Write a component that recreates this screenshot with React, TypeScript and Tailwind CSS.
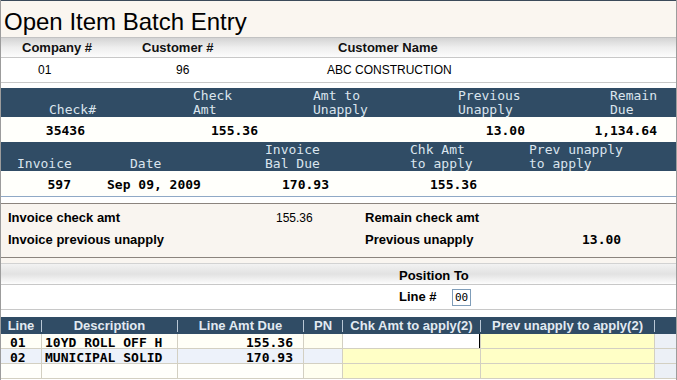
import React from "react";

const SANS = "font-['Liberation_Sans',Arial,sans-serif]";
const MONO = "font-['DejaVu_Sans_Mono','Liberation_Mono',monospace]";

type Cell = { w: string; bg: string; text?: string; cls?: string; border?: boolean; cursor?: boolean };

function GridRow({ cells }: { cells: Cell[] }) {
  return (
    <div className="flex h-[15px] border-b border-[#d3d0c2]">
      {cells.map((c, i) => (
        <div
          key={i}
          className={`${c.w} ${c.bg} ${c.border === false ? "" : "border-r border-[#d3d0c2]"} flex h-full overflow-visible whitespace-pre ${MONO} font-bold text-[13px] leading-[17px] text-black ${c.cls ?? ""}`}
        >
          {c.cursor ? <div className="ml-auto w-px h-full bg-black" /> : c.text}
        </div>
      ))}
    </div>
  );
}

export default function App() {
  const navyText = `${MONO} text-[13px] text-[#dbe5ee] whitespace-pre`;
  return (
    <div className={`w-[677px] h-[380px] overflow-hidden bg-white border-x border-[#9c9c9c] flex flex-col ${SANS}`}>
      <div className="h-px bg-[#3b4a5a] shrink-0" />
      {/* Title */}
      <div className="h-[37px] shrink-0 bg-[#faf6f0] border-b border-[#c2c2c2] pl-[3px] pt-[5px] text-[24px] leading-[31px] text-black">
        Open Item Batch Entry
      </div>
      {/* Header labels */}
      <div className="h-[20px] shrink-0 flex items-center bg-gradient-to-b from-[#d4d4d4] via-[#eeeeee] to-[#fcfcfc] border-b border-[#c8c8c8] text-[13px] font-bold text-[#111]">
        <div className="w-[141px] pl-[21px]">Company #</div>
        <div className="w-[196px]">Customer #</div>
        <div>Customer Name</div>
      </div>
      {/* Values */}
      <div className="h-[25px] shrink-0 flex items-center bg-white border-b border-[#c8c8c8] text-[12px] text-black">
        <div className="w-[175px] pl-[37px]">01</div>
        <div className="w-[151px]">96</div>
        <div>ABC CONSTRUCTION</div>
      </div>
      <div className="h-[5px] shrink-0 bg-white" />
      {/* Navy header 1 */}
      <div className={`h-[29px] shrink-0 flex bg-[#304c65] pt-[1px] leading-[14px] ${navyText}`}>
        <div className="w-[192px] pl-[48px] flex flex-col">
          <div className="h-[14px]"> </div>
          <div className="h-[14px]">Check#</div>
        </div>
        <div className="w-[120px] flex flex-col">
          <div className="h-[14px]">Check</div>
          <div className="h-[14px]">Amt</div>
        </div>
        <div className="w-[145px] flex flex-col">
          <div className="h-[14px]">Amt to</div>
          <div className="h-[14px]">Unapply</div>
        </div>
        <div className="w-[152px] flex flex-col">
          <div className="h-[14px]">Previous</div>
          <div className="h-[14px]">Unapply</div>
        </div>
        <div className="flex-1 flex flex-col">
          <div className="h-[14px]">Remain</div>
          <div className="h-[14px]">Due</div>
        </div>
      </div>
      {/* Data 1 */}
      <div className={`h-[25px] shrink-0 flex bg-[#fffffb] pt-[3px] leading-[22px] ${MONO} font-bold text-[13px] text-black whitespace-pre`}>
        <div className="w-[84px] text-right">35436</div>
        <div className="w-[173px] text-right">155.36</div>
        <div className="w-[267px] text-right">13.00</div>
        <div className="w-[132px] text-right">1,134.64</div>
      </div>
      {/* Navy header 2 */}
      <div className={`h-[29px] shrink-0 flex bg-[#304c65] pt-[1px] leading-[14px] ${navyText}`}>
        <div className="w-[129px] pl-[16px] flex flex-col">
          <div className="h-[14px]"> </div>
          <div className="h-[14px]">Invoice</div>
        </div>
        <div className="w-[135px] flex flex-col">
          <div className="h-[14px]"> </div>
          <div className="h-[14px]">Date</div>
        </div>
        <div className="w-[145px] flex flex-col">
          <div className="h-[14px]">Invoice</div>
          <div className="h-[14px]">Bal Due</div>
        </div>
        <div className="w-[119px] flex flex-col">
          <div className="h-[14px]">Chk Amt</div>
          <div className="h-[14px]">to apply</div>
        </div>
        <div className="flex-1 flex flex-col">
          <div className="h-[14px]">Prev unapply</div>
          <div className="h-[14px]">to apply</div>
        </div>
      </div>
      {/* Data 2 */}
      <div className={`h-[26px] shrink-0 flex bg-[#fffffb] border-b border-[#90a9c6] pt-[3px] leading-[22px] ${MONO} font-bold text-[13px] text-black whitespace-pre`}>
        <div className="w-[70px] text-right">597</div>
        <div className="w-[140px] pl-[36px]">Sep 09, 2009</div>
        <div className="w-[118px] text-right">170.93</div>
        <div className="w-[148px] text-right">155.36</div>
      </div>
      <div className="h-[6px] shrink-0 bg-white" />
      {/* Cream summary */}
      <div className="h-[55px] shrink-0 bg-[#f9f5f0] border-y border-[#8b847e] pt-[3px] leading-[22px]">
        <div className="flex h-[22px]">
          <div className="w-[275px] pl-[7px] text-[13px] font-bold text-black">Invoice check amt</div>
          <div className="w-[89px] text-[12px] text-black">155.36</div>
          <div className="w-[217px] text-[13px] font-bold text-black">Remain check amt</div>
          <div className={`flex-1 ${MONO} font-bold text-[13px] text-black`}></div>
        </div>
        <div className="flex h-[22px]">
          <div className="w-[275px] pl-[7px] text-[13px] font-bold text-black">Invoice previous unapply</div>
          <div className="w-[89px] text-[12px] text-black"></div>
          <div className="w-[217px] text-[13px] font-bold text-black">Previous unapply</div>
          <div className={`flex-1 ${MONO} font-bold text-[13px] text-black`}>13.00</div>
        </div>
      </div>
      <div className="h-[6px] shrink-0 bg-[#f9f5f0] border-b border-[#d2d2d2]" />
      {/* Position To */}
      <div className="h-[21px] shrink-0 bg-gradient-to-b from-[#f2f2f2] via-[#e2e2e2] to-[#fdfdfd] border-b border-[#c8c8c8] pl-[398px] pt-[3px] leading-[17px] text-[13px] font-bold text-black">
        Position To
      </div>
      <div className="h-[25px] shrink-0 flex items-center bg-white border-b border-[#c8c8c8] pl-[398px]">
        <div className="w-[53px] text-[13px] font-bold text-black">Line #</div>
        <div className={`w-[19px] h-[17px] border border-[#7f9db9] bg-white pl-[2px] ${MONO} text-[11px] leading-[15px] text-black`}>00</div>
      </div>
      <div className="h-[7px] shrink-0 bg-white" />
      {/* Grid header */}
      <div className="h-[17px] shrink-0 flex bg-[#304c65] text-[13px] font-bold text-[#e2eaf2] leading-[16px]">
        {[
          ["w-[41px]", "Line"],
          ["w-[136px]", "Description"],
          ["w-[126px]", "Line Amt Due"],
          ["w-[39px]", "PN"],
          ["w-[138px]", "Chk Amt to apply(2)"],
          ["w-[174px]", "Prev unapply to apply(2)"],
        ].map(([w, t]) => (
          <div key={t} className={`${w} flex items-center`}>
            <div className="flex-1 text-center whitespace-pre">{t}</div>
            <div className="w-px h-[12px] bg-[#b9c7d5]" />
          </div>
        ))}
        <div className="flex-1" />
      </div>
      {/* Grid rows */}
      <GridRow
        cells={[
          { w: "w-[41px]", bg: "bg-[#fffff7]", text: "01", cls: "pl-[9px]" },
          { w: "w-[136px]", bg: "bg-[#fffff7]", text: "10YD ROLL OFF H", cls: "pl-[3px]" },
          { w: "w-[126px]", bg: "bg-[#fffff7]", text: "155.36", cls: "justify-end pr-[10px]" },
          { w: "w-[39px]", bg: "bg-[#fffff0]" },
          { w: "w-[138px]", bg: "bg-white", cursor: true },
          { w: "w-[174px]", bg: "bg-[#ffffc6]" },
          { w: "flex-1", bg: "bg-[#ecf0f6]", border: false },
        ]}
      />
      <GridRow
        cells={[
          { w: "w-[41px]", bg: "bg-[#edf2fa]", text: "02", cls: "pl-[9px]" },
          { w: "w-[136px]", bg: "bg-[#edf2fa]", text: "MUNICIPAL SOLID", cls: "pl-[3px]" },
          { w: "w-[126px]", bg: "bg-[#edf2fa]", text: "170.93", cls: "justify-end pr-[10px]" },
          { w: "w-[39px]", bg: "bg-[#edf2fa]" },
          { w: "w-[138px]", bg: "bg-[#ffffc6]" },
          { w: "w-[174px]", bg: "bg-[#ffffc6]" },
          { w: "flex-1", bg: "bg-[#ecf0f6]", border: false },
        ]}
      />
      <GridRow
        cells={[
          { w: "w-[41px]", bg: "bg-[#fffffb]" },
          { w: "w-[136px]", bg: "bg-[#fffffb]" },
          { w: "w-[126px]", bg: "bg-[#fffffb]" },
          { w: "w-[39px]", bg: "bg-[#fffff0]" },
          { w: "w-[138px]", bg: "bg-[#ffffc6]" },
          { w: "w-[174px]", bg: "bg-[#ffffc6]" },
          { w: "flex-1", bg: "bg-[#ecf0f6]", border: false },
        ]}
      />
    </div>
  );
}
